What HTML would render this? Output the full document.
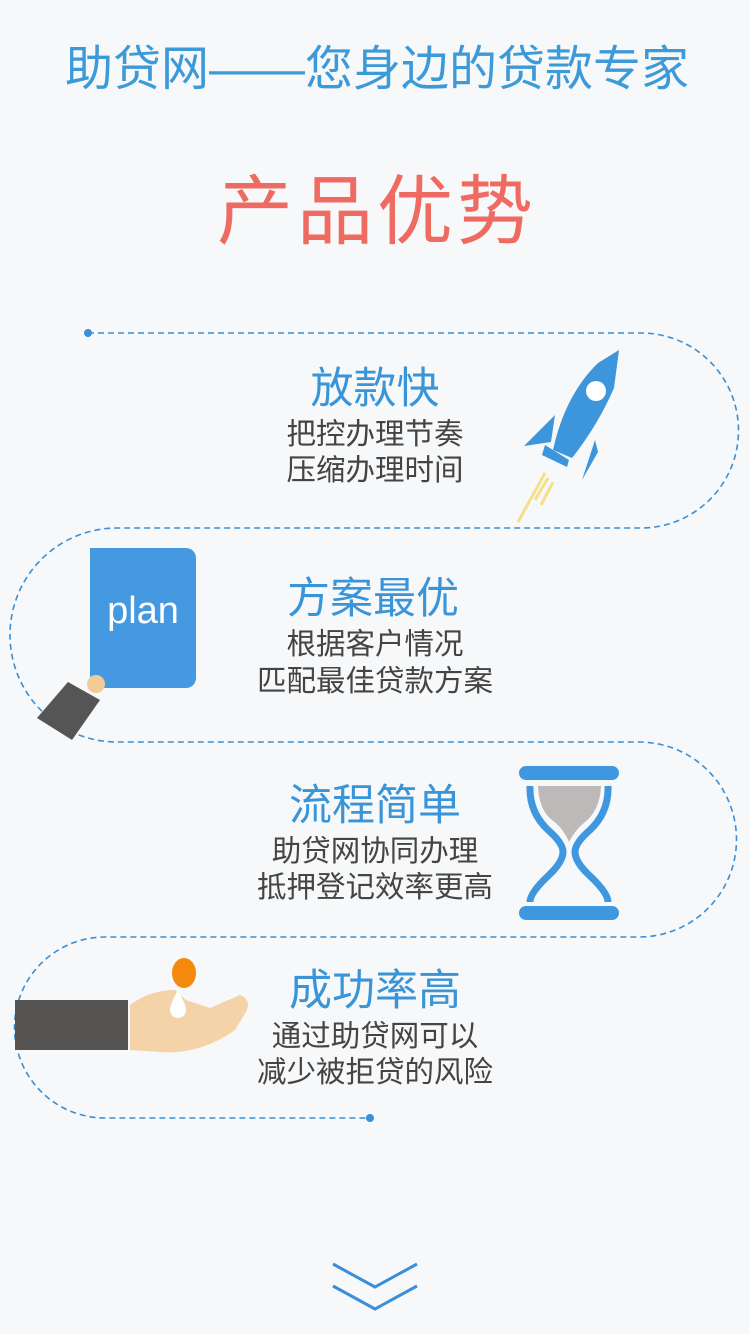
<!DOCTYPE html>
<html><head><meta charset="utf-8"><style>
body{margin:0;width:750px;height:1334px;background:#f7f8f9;position:relative;overflow:hidden;font-family:"Liberation Sans","Noto Sans CJK SC",sans-serif}
.t{position:absolute;left:0;width:750px;text-align:center;white-space:nowrap}
.h{color:#3a95d8;font-size:43px;line-height:44px}
.s{color:#444;font-size:29.5px;line-height:32px}
</style></head><body>
<div class="t" style="top:42px;font-size:48px;color:#3d9ad8;line-height:56px;left:2px">助贷网——您身边的贷款专家</div>
<div class="t" style="top:170px;font-size:76px;color:#ef6b62;line-height:86px;letter-spacing:4px;left:2px">产品优势</div>
<svg width="750" height="1334" style="position:absolute;left:0;top:0">
<path d="M88 333 H641 A97.5 97.5 0 0 1 641 528 H117 A107 107 0 0 0 117 742 H639 A97.5 97.5 0 0 1 639 937 H105 A90.5 90.5 0 0 0 105 1118 H370" fill="none" stroke="#3a8fd6" stroke-width="1.6" stroke-dasharray="6 4"/>
<circle cx="88" cy="333" r="4" fill="#3a8fd6"/><circle cx="370" cy="1118" r="4" fill="#3a8fd6"/>
<g>
<path d="M535 500 L548 478 M541 505 L553 482 M518 522 L545 473" stroke="#f2e08a" stroke-width="3" fill="none"/>
<path d="M619 350 L598 363 Q565 395 553 450 L572 458 Q598 425 614 388 Z" fill="#3d95dc"/>
<circle cx="596" cy="391" r="10" fill="#fff"/>
<path d="M555 415 L524 446 L551 442 Z" fill="#3d95dc"/>
<path d="M595 440 L582 480 L598 452 Z" fill="#3d95dc"/>
<path d="M545 445 L569 460 L567 467 L542 455 Z" fill="#3d95dc"/>
</g>
<rect x="90" y="548" width="106" height="140" rx="10" fill="#4599e0"/>
<rect x="90" y="548" width="20" height="140" fill="#4599e0"/>
<text x="143" y="623" font-family="Liberation Sans" font-size="38" fill="#fff" text-anchor="middle">plan</text>
<circle cx="96" cy="684" r="9" fill="#f2cb97"/>
<path d="M68 682 L100 700 L72 740 L37 718 Z" fill="#555"/>
<rect x="519" y="766" width="100" height="14" rx="7" fill="#3f97e0"/>
<rect x="519" y="906" width="100" height="14" rx="7" fill="#3f97e0"/>
<path d="M538 786 H601 Q600 810 585 822 Q575 830 569 842 Q563 828 552 820 Q539 810 538 786Z" fill="#bcb9b8"/>
<path d="M530 786 Q529 812 548 830 Q563 843 563 852 Q563 862 548 876 Q530 893 530 902 M608 786 Q609 812 590 830 Q575 843 575 852 Q575 862 590 876 Q608 893 608 902" stroke="#3f97e0" stroke-width="7" fill="none"/>
<rect x="15" y="1000" width="113" height="50" fill="#555453"/>
<path d="M130 1005 Q150 990 175 990 L186 1000 L210 1008 L240 995 Q252 1000 246 1012 L235 1030 Q200 1055 160 1052 L130 1050 Z" fill="#f4d3a8"/>
<ellipse cx="184" cy="973" rx="12" ry="15" fill="#f5890e"/>
<path d="M178 990 Q186 1005 186 1010 A8 8 0 0 1 170 1010 Q170 1005 178 990Z" fill="#fff"/>
<path d="M333 1264 L375 1287 L417 1264 M333 1286 L375 1309 L417 1286" stroke="#3a8fd6" stroke-width="3" fill="none"/>
</svg>
<div class="t h" style="top:367px">放款快</div>
<div class="t s" style="top:419px">把控办理节奏</div>
<div class="t s" style="top:455px">压缩办理时间</div>
<div class="t h" style="top:577px;left:-2px">方案最优</div>
<div class="t s" style="top:629px">根据客户情况</div>
<div class="t s" style="top:666px">匹配最佳贷款方案</div>
<div class="t h" style="top:784px">流程简单</div>
<div class="t s" style="top:836px">助贷网协同办理</div>
<div class="t s" style="top:872px">抵押登记效率更高</div>
<div class="t h" style="top:969px">成功率高</div>
<div class="t s" style="top:1021px">通过助贷网可以</div>
<div class="t s" style="top:1057px">减少被拒贷的风险</div>
</body></html>
